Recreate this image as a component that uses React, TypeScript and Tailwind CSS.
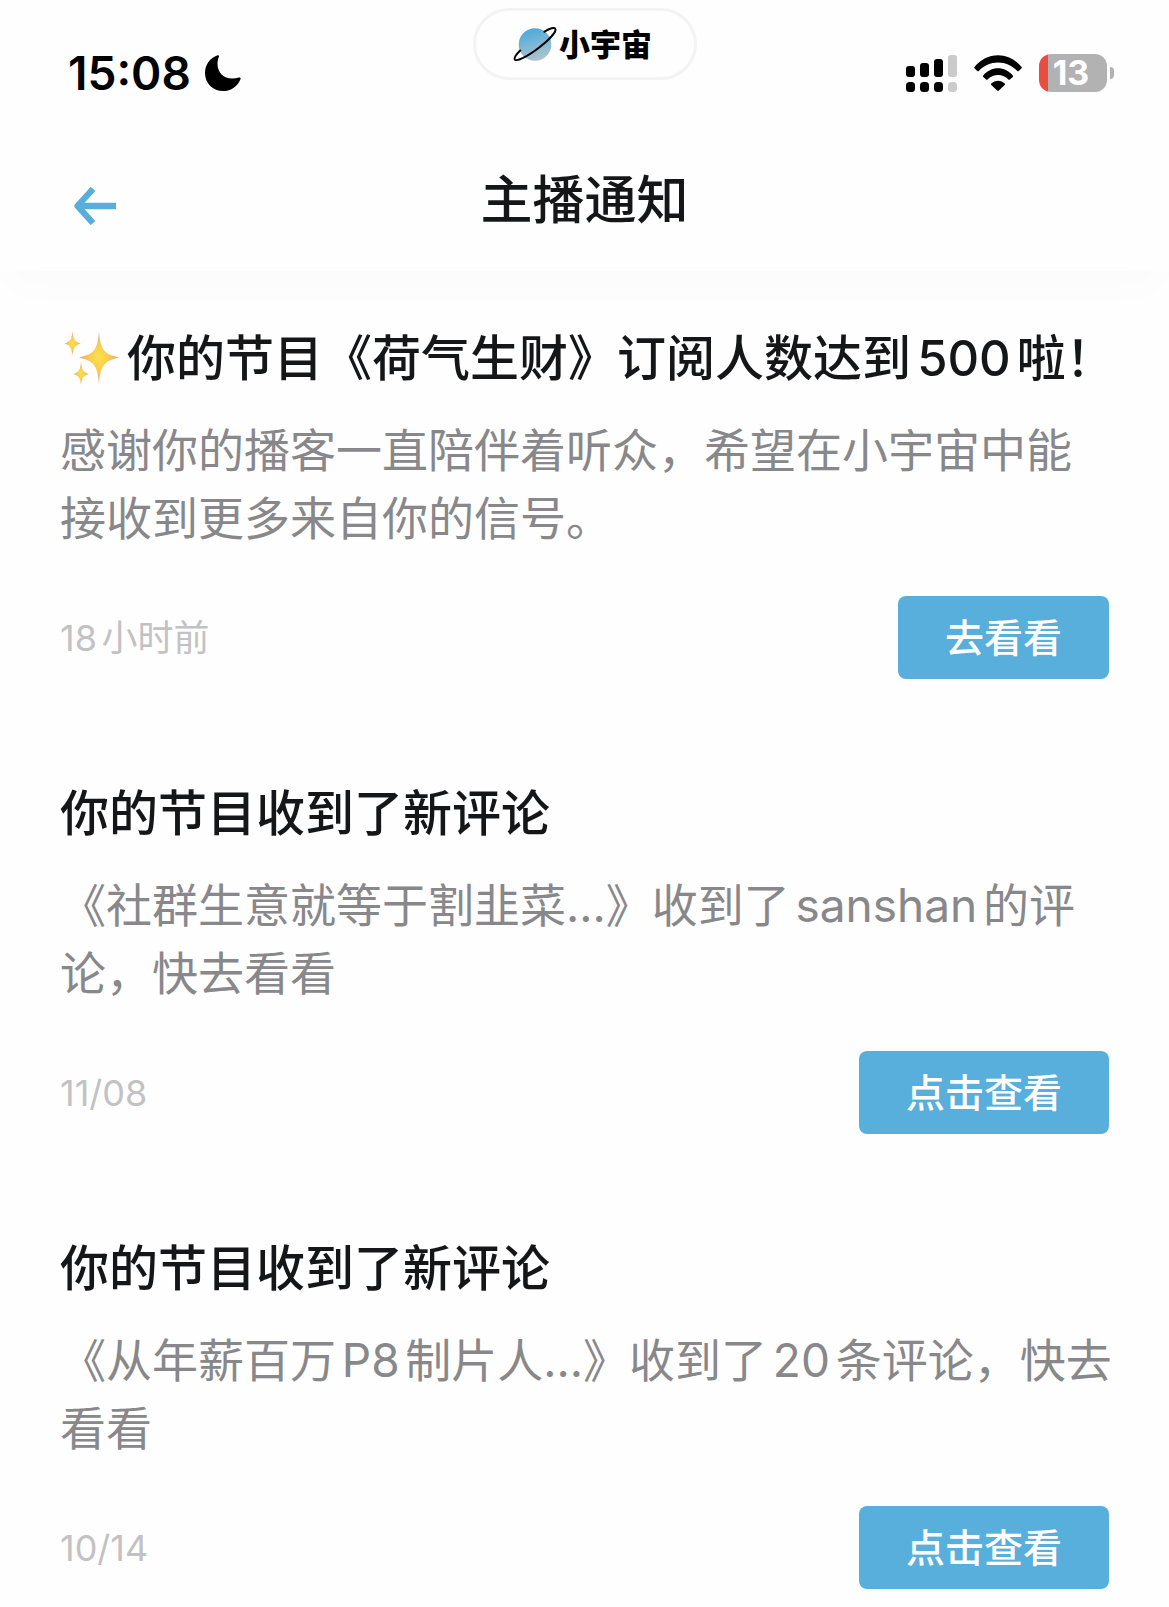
type Notice = {
  title: string;
  sparkle?: boolean;
  body: string;
  time: string;
  action: string;
};

const notices: Notice[] = [
  {
    title: "你的节目《荷气生财》订阅人数达到500啦！",
    sparkle: true,
    body: "感谢你的播客一直陪伴着听众，希望在小宇宙中能接收到更多来自你的信号。",
    time: "18小时前",
    action: "去看看",
  },
  {
    title: "你的节目收到了新评论",
    body: "《社群生意就等于割韭菜…》收到了sanshan的评论，快去看看",
    time: "11/08",
    action: "点击查看",
  },
  {
    title: "你的节目收到了新评论",
    body: "《从年薪百万P8制片人…》收到了20条评论，快去看看",
    time: "10/14",
    action: "点击查看",
  },
];

function Moon() {
  return (
    <svg className="h-9 w-9" viewBox="0 0 36 36" aria-hidden="true">
      <path
        d="M12.6 .3C13.600 0 14.300 .8 13.900 1.700C12.900 4 12.500 6.300 12.500 8.800C12.500 17.500 18.500 23.600 27.200 23.600C29.700 23.600 31.900 23.200 33.800 22.500C34.900 22.100 36 22.900 35.600 23.900C32.800 31.200 26 36 18.200 36C7.900 36 0 28.100 0 17.900C0 9.900 5 2.900 12.600 .3Z"
        fill="#000"
      />
    </svg>
  );
}

function Planet() {
  return (
    <svg className="h-9 w-11" viewBox="0 0 44 36" aria-hidden="true">
      <defs>
        <linearGradient id="planet" x1="0" y1="0" x2="0.300" y2="1">
          <stop offset="0.150" stopColor="#4fabdc" />
          <stop offset="1" stopColor="#a9c3cc" />
        </linearGradient>
      </defs>
      <circle cx="22" cy="18.500" r="16.300" fill="url(#planet)" />
      <path
        d="M31.500 5.600C37 2.200 41.500 1.200 42.300 2.900C43.600 5.500 36.500 13.400 26.500 21.300C15 30.200 3.800 36 1.900 33.600C.7 32 3.200 28.500 7.200 24.500"
        fill="none"
        stroke="#000"
        strokeWidth="2"
        strokeLinecap="round"
      />
    </svg>
  );
}

function Signal() {
  return (
    <svg className="h-[38px] w-[51px]" viewBox="0 0 51 38" aria-hidden="true">
      <g fill="#000">
        <rect x="0" y="12" width="9" height="11" rx="3" />
        <rect x="14" y="9" width="9" height="14" rx="3" />
        <rect x="28" y="5" width="9" height="18" rx="3" />
        <rect x="0" y="28" width="9" height="10" rx="3.500" />
        <rect x="14" y="28" width="9" height="10" rx="3.500" />
        <rect x="28" y="28" width="9" height="10" rx="3.500" />
      </g>
      <g fill="#cbcbcb">
        <rect x="42" y="1" width="9" height="22" rx="3" />
        <rect x="42" y="28" width="9" height="10" rx="3.500" />
      </g>
    </svg>
  );
}

function Wifi() {
  return (
    <svg className="h-9 w-12" viewBox="0 0 48 36" aria-hidden="true">
      <path d="M.6 11.800C6.600 4.600 15 .3 24 .3S41.400 4.600 47.400 11.800C47.900 12.400 47.900 12.900 47.400 13.400L44.700 16C44.200 16.500 43.600 16.400 43.200 15.900C38.300 10.500 31.400 7.400 24 7.400S9.700 10.500 4.800 15.900C4.400 16.400 3.800 16.500 3.300 16L.6 13.400C.1 12.900 .1 12.400 .6 11.800Z" />
      <path d="M9.200 20.400C12.900 15.900 18.300 13.200 24 13.200S35.100 15.900 38.800 20.400C39.200 20.900 39.200 21.500 38.700 21.900L35.900 24.500C35.400 25 34.900 24.900 34.400 24.400C31.700 21.500 28 19.900 24 19.900S16.300 21.500 13.600 24.400C13.100 24.900 12.600 25 12.100 24.500L9.300 21.900C8.800 21.500 8.800 20.900 9.200 20.400Z" />
      <path d="M17.300 28.500C19 26.800 21.400 25.700 24 25.700S29 26.800 30.700 28.500C31.200 29 31.200 29.500 30.700 30L24.900 35.600C24.300 36.100 23.700 36.100 23.100 35.600L17.300 30C16.800 29.500 16.800 29 17.300 28.500Z" />
    </svg>
  );
}

function Battery() {
  return (
    <div className="flex items-center gap-[3px]">
      <div className="flex h-[38px] w-[68px] items-center justify-center rounded-xl bg-[linear-gradient(to_right,#e84e40_9px,#b2b2b2_9px)] pr-1 text-[34px] leading-none font-bold text-white">
        13
      </div>
      <div className="h-3 w-1 rounded-r-full bg-[#b2b2b2]" />
    </div>
  );
}

function BackArrow() {
  return (
    <svg className="h-[38px] w-11" viewBox="0 0 44 38" aria-hidden="true">
      <path
        d="M43 19H4M20 2L4.500 19L20 36"
        fill="none"
        stroke="#57aedb"
        strokeWidth="6.300"
        strokeLinejoin="round"
      />
    </svg>
  );
}

function Sparkles() {
  return (
    <svg className="h-14 w-[55px] shrink-0" viewBox="0 0 55 56" aria-hidden="true">
      <defs>
        <radialGradient id="spark">
          <stop offset="0" stopColor="#fbe04c" />
          <stop offset="0.450" stopColor="#f7cf4e" />
          <stop offset="1" stopColor="#eda27a" />
        </radialGradient>
      </defs>
      <g fill="url(#spark)">
        <path d="M35 0C36.500 18 39 23 55 26.500C39 30 36.500 36 35 53C33.500 36 31 30 15 26.500C31 23 33.500 18 35 0Z" />
        <path d="M8.500 0C9.300 8.500 11 11 17 12.500C11 14 9.300 16.500 8.500 25C7.700 16.500 6 14 0 12.500C6 11 7.700 8.500 8.500 0Z" />
        <path d="M17 31C17.800 39 19.500 41.500 25 43C19.500 44.500 17.800 46.500 17 54C16.200 46.500 14.500 44.500 9 43C14.500 41.500 16.200 39 17 31Z" />
      </g>
    </svg>
  );
}

function NoticeItem({ notice }: { notice: Notice }) {
  return (
    <article>
      <h2 className="flex items-center gap-2 text-[49px] leading-[68px] font-medium whitespace-nowrap text-[#151617]">
        {notice.sparkle && (
          <span className="flex pl-1">
            <Sparkles />
          </span>
        )}
        <span>{notice.title}</span>
      </h2>
      <p className="-mr-2 mt-[23px] text-[46px] leading-[68px] text-[#88888b]">{notice.body}</p>
      <div className="mt-11 flex items-center justify-between">
        <time className="text-[36px] leading-none text-[#c2c2c4]">{notice.time}</time>
        <button
          type="button"
          className="h-[83px] rounded-lg bg-[#59afdb] px-[47px] text-[39px] leading-none font-medium text-white"
        >
          {notice.action}
        </button>
      </div>
    </article>
  );
}

export default function App() {
  return (
    <div
      lang="zh-CN"
      className="min-h-screen overflow-hidden bg-[#fefefe] font-['Inter','Noto_Sans_CJK_SC',sans-serif] [text-autospace:normal]"
    >
      <header className="bg-[#fefefe] shadow-[0_24px_40px_-8px_rgba(0,0,0,0.015)]">
        <div className="grid grid-cols-[1fr_auto_1fr] items-start pt-2">
          <div className="flex items-center gap-3.5 pt-[42px] pl-[68px] text-[46px] leading-none font-semibold text-black">
            <span>15:08</span>
            <Moon />
          </div>
          <div className="flex h-[72px] w-56 items-center justify-center gap-0.5 rounded-full border-[3px] border-[#f3f3f3] pr-1">
            <Planet />
            <span className="text-[31px] leading-none font-black text-black [font-style:oblique_8deg]">小宇宙</span>
          </div>
          <div className="flex items-center justify-end gap-[17px] pt-[46px] pr-[55px]">
            <Signal />
            <Wifi />
            <Battery />
          </div>
        </div>
        <nav className="mt-[67px] grid grid-cols-[1fr_auto_1fr] items-center px-[73px] pb-8">
          <button type="button" aria-label="返回" className="flex justify-self-start pt-2.5">
            <BackArrow />
          </button>
          <h1 className="text-[52px] leading-[76px] font-medium text-[#151617]">主播通知</h1>
        </nav>
      </header>
      <main className="flex flex-col gap-[101px] px-[60px] pt-[54px] pb-[18px]">
        {notices.map((notice, index) => (
          <NoticeItem key={index} notice={notice} />
        ))}
      </main>
    </div>
  );
}
